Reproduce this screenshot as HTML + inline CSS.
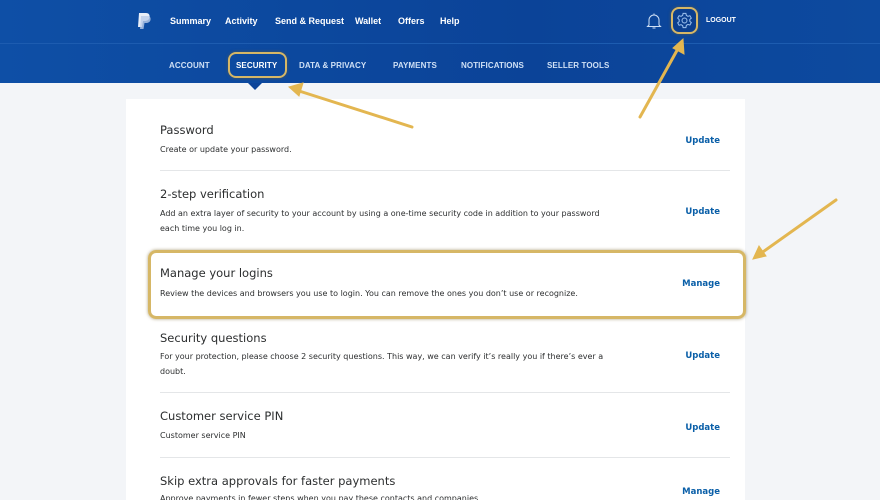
<!DOCTYPE html>
<html><head><style>
*{margin:0;padding:0;box-sizing:border-box}
html,body{width:880px;height:500px;overflow:hidden}
body{background:#f3f5f8;font-family:"DejaVu Sans","Liberation Sans",sans-serif;position:relative}
.hdr{position:absolute;left:0;top:0;width:880px;height:83px;background:linear-gradient(90deg,#0e4fa6,#0b4398 60%,#0d4a9f)}
.hdr .sep{position:absolute;left:0;top:43px;width:880px;height:1px;background:#1d5cb0}
.t{position:absolute;color:#fff;font-family:"Liberation Sans",sans-serif;font-size:9px;font-weight:bold;white-space:nowrap}
.s{position:absolute;color:#cfe0f5;font-family:"Liberation Sans",sans-serif;font-size:8px;font-weight:bold;white-space:nowrap;letter-spacing:.1px}
.card{position:absolute;left:126px;top:99px;width:619px;height:401px;background:#fff}
.h{position:absolute;left:160px;font-size:11.5px;color:#2c2e2f;white-space:nowrap}
.d{position:absolute;left:160px;font-size:8px;color:#2c2e2f;line-height:15px;white-space:nowrap}
.a{position:absolute;right:160px;font-size:8.5px;font-weight:bold;color:#0a5fa8}
.hr{position:absolute;left:160px;width:570px;height:1px;background:#e4e6e8}
.box{position:absolute;border:3px solid #d6b766;border-radius:8px;box-shadow:0 0 3px rgba(120,100,40,.6)}
</style></head><body>
<div class="hdr"><div class="sep"></div></div>
<svg style="position:absolute;left:136px;top:12px" width="16" height="18" viewBox="0 0 16 18"><path d="M3 1h7c3 0 4 2 3.5 4.5C13 8 11 9 8.5 9H7l-1 6H2z" fill="#e8eef8"/><path d="M5 4h7c2 0 3 2 2.5 4C14 10 12 11 10 11H8.5l-1 6H4z" fill="#b8cbe8" opacity=".8"/></svg>
<div class="t" style="left:170px;top:16px">Summary</div>
<div class="t" style="left:225px;top:16px">Activity</div>
<div class="t" style="left:275px;top:16px">Send &amp; Request</div>
<div class="t" style="left:355px;top:16px">Wallet</div>
<div class="t" style="left:398px;top:16px">Offers</div>
<div class="t" style="left:440px;top:16px">Help</div>
<svg style="position:absolute;left:646px;top:12px" width="16" height="18" viewBox="0 0 16 18" fill="none" stroke="#cfe0f5" stroke-width="1"><path d="M3 13V8a5 5 0 0 1 10 0v5l1.5 1.5h-13zM8 3V1.5M6.5 16h3"/></svg>
<div class="box" style="left:671px;top:7px;width:27px;height:27px;border-width:2.5px;background:#0b3f8f"></div>
<svg style="position:absolute;left:676px;top:12px" width="17" height="17" viewBox="0 0 24 24" fill="none" stroke="#9fc4f0" stroke-width="1.4"><circle cx="12" cy="12" r="3.5"/><path d="M10 2h4l.6 2.8 2.3 1.3 2.7-.9 2 3.4-2.1 1.9v2.6l2.1 1.9-2 3.4-2.7-.9-2.3 1.3L14 22h-4l-.6-2.8-2.3-1.3-2.7.9-2-3.4 2.1-1.9v-2.6L2.4 8.6l2-3.4 2.7.9 2.3-1.3z"/></svg>
<div class="t" style="left:706px;top:17px;font-size:7px">LOGOUT</div>
<div class="s" style="left:169px;top:61px">ACCOUNT</div>
<div class="box" style="left:228px;top:52px;width:59px;height:26px;border-width:2.5px"></div>
<div class="s" style="left:236px;top:61px;color:#fff">SECURITY</div>
<div class="s" style="left:299px;top:61px">DATA &amp; PRIVACY</div>
<div class="s" style="left:393px;top:61px">PAYMENTS</div>
<div class="s" style="left:461px;top:61px">NOTIFICATIONS</div>
<div class="s" style="left:547px;top:61px">SELLER TOOLS</div>
<div style="position:absolute;left:248px;top:83px;border-left:7px solid transparent;border-right:7px solid transparent;border-top:7px solid #0c4499"></div>
<div class="card"></div>
<div class="h" style="top:123px">Password</div>
<div class="d" style="top:142px">Create or update your password.</div>
<div class="a" style="top:136px">Update</div>
<div class="hr" style="top:170px"></div>
<div class="h" style="top:187px">2-step verification</div>
<div class="d" style="top:206px">Add an extra layer of security to your account by using a one-time security code in addition to your password<br>each time you log in.</div>
<div class="a" style="top:207px">Update</div>
<div class="hr" style="top:250px"></div>
<div class="box" style="left:148px;top:250px;width:598px;height:69px"></div>
<div class="h" style="top:266px">Manage your logins</div>
<div class="d" style="top:286px">Review the devices and browsers you use to login. You can remove the ones you don’t use or recognize.</div>
<div class="a" style="top:279px;right:160px">Manage</div>
<div class="h" style="top:331px">Security questions</div>
<div class="d" style="top:349px">For your protection, please choose 2 security questions. This way, we can verify it’s really you if there’s ever a<br>doubt.</div>
<div class="a" style="top:351px">Update</div>
<div class="hr" style="top:392px"></div>
<div class="h" style="top:409px">Customer service PIN</div>
<div class="d" style="top:428px">Customer service PIN</div>
<div class="a" style="top:423px">Update</div>
<div class="hr" style="top:457px"></div>
<div class="h" style="top:474px">Skip extra approvals for faster payments</div>
<div class="d" style="top:491px;height:9px;overflow:hidden">Approve payments in fewer steps when you pay these contacts and companies.</div>
<div class="a" style="top:487px">Manage</div>
<svg style="position:absolute;left:0;top:0" width="880" height="500" fill="none" stroke="#e3b650" stroke-width="3" stroke-linecap="round">
<path d="M412 127L296 90"/><path d="M289 87l14-4-4 13z" fill="#e3b650" stroke-width="1"/>
<path d="M640 117L680 45"/><path d="M683 39l1 15-11-6z" fill="#e3b650" stroke-width="1"/>
<path d="M836 200L760 254"/><path d="M753 259l6-13 7 10z" fill="#e3b650" stroke-width="1"/>
</svg>
</body></html>
